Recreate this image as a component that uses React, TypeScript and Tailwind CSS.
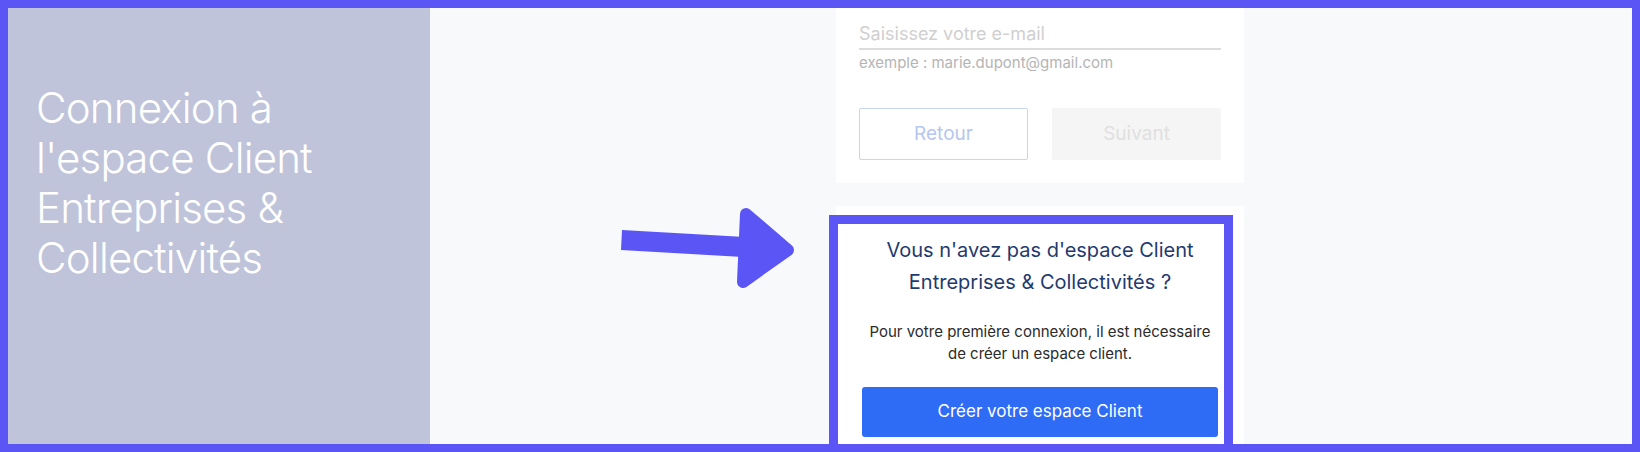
export default function App() {
  return (
    <div className="w-[1640px] h-[452px] border-8 border-[#5b55f6] flex overflow-hidden" style={{ fontFamily: 'Inter, "Noto Sans", sans-serif' }}>
      <div className="w-[422px] shrink-0 bg-[#bfc4da] pt-[75px] pl-[28px]">
        <h1 className="text-[42px] leading-[50px] font-light text-white tracking-[-0.8px]">
          Connexion à<br />l'espace Client<br />Entreprises &amp;<br />Collectivités
        </h1>
      </div>

      <main className="relative flex-1 bg-[#f8f9fb] overflow-hidden pl-[406px]">
        <div className="w-[408px] flex flex-col gap-[23px]">
          <section className="bg-white px-[23px] pt-[10px] pb-[23px]">
            <div className="h-[32px] pt-[4px] border-b-2 border-[#dcdcdc] text-[18px] leading-[24px] text-[#cfcfcf]">
              Saisissez votre e-mail
            </div>
            <p className="mt-[3px] text-[15px] leading-[20px] text-[#b4b4b4]">exemple : marie.dupont@gmail.com</p>
            <div className="mt-[35px] flex gap-[24px]">
              <button className="w-[169px] h-[52px] border border-[#c8d5f1] rounded-[2px] bg-white text-[19px] text-[#b6c6ee]">Retour</button>
              <button className="w-[169px] h-[52px] rounded-[2px] bg-[#f5f5f5] text-[19px] text-[#e0e0e0]">Suivant</button>
            </div>
          </section>

          <section className="bg-white px-[26px] pt-[28px] h-[300px] text-center">
            <h2 className="text-[20px] leading-[32px] text-[#1f3a6f]">
              Vous n'avez pas d'espace Client<br />Entreprises &amp; Collectivités ?
            </h2>
            <p className="mt-[23px] text-[15px] leading-[22px] text-[#2b2b2b]">
              Pour votre première connexion, il est nécessaire<br />de créer un espace client.
            </p>
            <button className="mt-[22px] w-full h-[50px] rounded-[3px] bg-[#2f6cf6] text-white text-[17px]">Créer votre espace Client</button>
          </section>
        </div>

        {/* highlight annotation */}
        <div className="absolute left-[399px] top-[207px] w-[404px] h-[250px] border-[9px] border-[#5b55f6]" />

        <svg className="absolute left-[170px] top-[182px]" width="220" height="110" viewBox="0 0 220 110">
          <polygon points="22,40 145,47 143,67 21,60" fill="#5b55f6" />
          <polygon points="146,24 188,60 143,92" fill="#5b55f6" stroke="#5b55f6" strokeWidth="12" strokeLinejoin="round" />
        </svg>
      </main>
    </div>
  );
}
